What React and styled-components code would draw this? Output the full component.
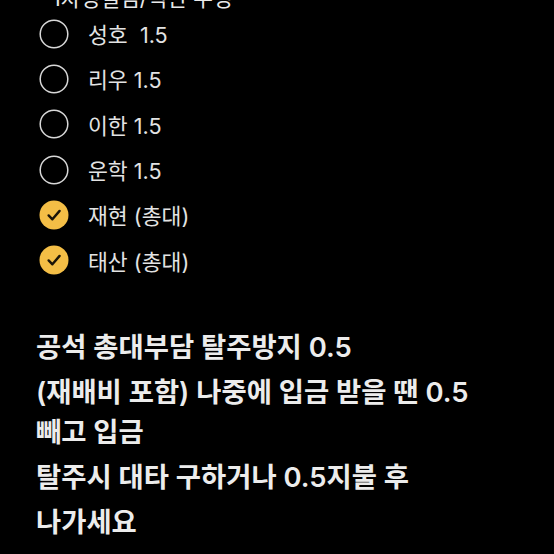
import React from "react";
import styled, { createGlobalStyle } from "styled-components";

const GlobalStyle = createGlobalStyle`
  html, body {
    margin: 0;
    padding: 0;
    background: #000;
  }
  body {
    font-family: Inter, "Noto Sans CJK KR", "Noto Sans", sans-serif;
    color: #e9e9e9;
  }
`;

const members = [
  { name: "성호  1.5", done: false },
  { name: "리우 1.5", done: false },
  { name: "이한 1.5", done: false },
  { name: "운학 1.5", done: false },
  { name: "재현 (총대)", done: true },
  { name: "태산 (총대)", done: true },
];

const Check = ({ done }) =>
  done ? (
    <svg width="30" height="30" viewBox="0 0 30 30">
      <circle cx="15" cy="15" r="14.5" fill="#f4be46" />
      <path
        d="M9.6 15.4l3.8 3.9 7.2-8.4"
        fill="none"
        stroke="#1b1408"
        strokeWidth="2.4"
        strokeLinecap="round"
        strokeLinejoin="round"
      />
    </svg>
  ) : (
    <svg width="30" height="30" viewBox="0 0 30 30">
      <circle cx="15" cy="15" r="13.8" fill="none" stroke="#d8d8d8" strokeWidth="1.5" />
    </svg>
  );

const App = () => {
  return (
    <>
      <GlobalStyle />
      <Page>
        <Heading>1차정결님/직관 수정</Heading>
        <List>
          {members.map((m) => (
            <Row key={m.name}>
              <Check done={m.done} />
              <Name>{m.name}</Name>
            </Row>
          ))}
        </List>
        <Notice>
          <Line>공석 총대부담 탈주방지 0.5</Line>
          <Line>
            (재배비 포함) 나중에 입금 받을 땐 0.5
            <br />
            빼고 입금
          </Line>
          <Line>탈주시 대타 구하거나 0.5지불 후</Line>
          <Line>나가세요</Line>
        </Notice>
      </Page>
    </>
  );
};

const Page = styled.div`
  width: 554px;
  height: 554px;
  overflow: hidden;
  background: #000;
`;

const Heading = styled.div`
  margin: -14px 0 0 52px;
  height: 25px;
  font-size: 21.5px;
  line-height: 24px;
  white-space: nowrap;
  color: #e9e9e9;
`;

const List = styled.div`
  display: flex;
  flex-direction: column;
  padding-left: 39px;
`;

const Row = styled.div`
  display: flex;
  align-items: center;
  gap: 19px;
  height: 45.3px;
`;

const Name = styled.span`
  font-size: 21.6px;
  white-space: pre;
  color: #e3e3e3;
`;

const Notice = styled.div`
  margin-top: 44px;
  padding-left: 36px;
  display: flex;
  flex-direction: column;
  gap: 5px;
`;

const Line = styled.div`
  font-size: 27.4px;
  font-weight: 600;
  line-height: 40px;
  color: #ececec;
`;

export default App;
